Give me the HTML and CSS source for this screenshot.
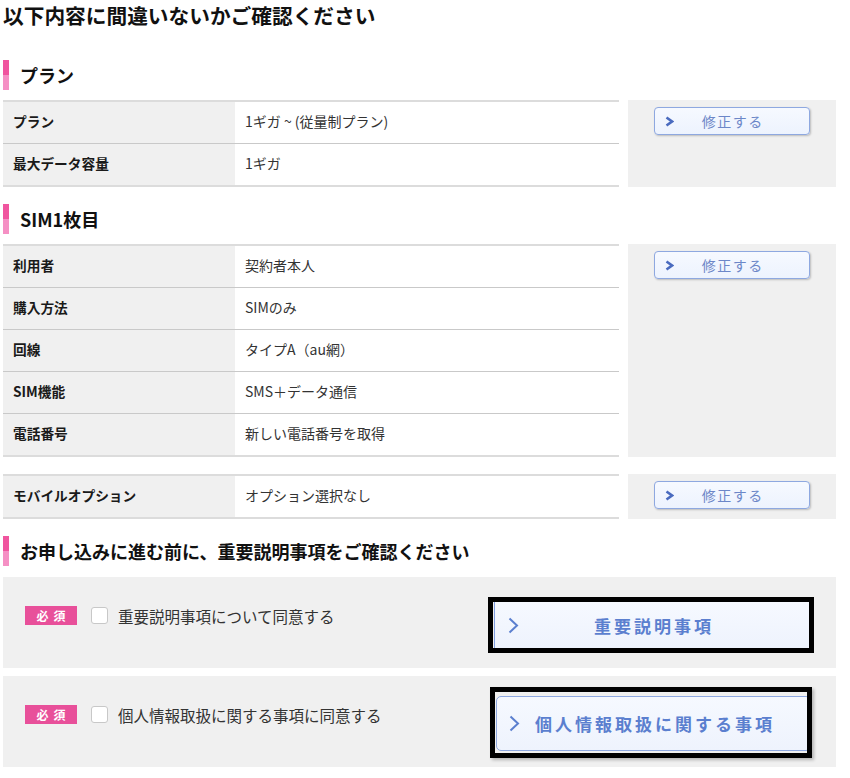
FILE: index.html
```html
<!DOCTYPE html>
<html lang="ja">
<head>
<meta charset="utf-8">
<title>確認</title>
<link rel="stylesheet" href="styles.css">
</head>
<body>
<div class="page">
  <h1 class="title">以下内容に間違いないかご確認ください</h1>

  <h2 class="sec-head first">プラン</h2>
  <div class="block">
    <div class="info">
      <div class="row"><div class="lbl">プラン</div><div class="val">1ギガ ~ (従量制プラン)</div></div>
      <div class="row"><div class="lbl">最大データ容量</div><div class="val">1ギガ</div></div>
    </div>
    <div class="edit-box">
      <button class="edit-btn" type="button">
        <svg class="chev-s" width="9" height="11" viewBox="0 0 9 11"><polyline points="1.5,1.5 7,5.5 1.5,9.5" fill="none" stroke="#4a6bbf" stroke-width="2.6"/></svg>
        <span>修正する</span>
      </button>
    </div>
  </div>

  <h2 class="sec-head">SIM1枚目</h2>
  <div class="block">
    <div class="info">
      <div class="row"><div class="lbl">利用者</div><div class="val">契約者本人</div></div>
      <div class="row"><div class="lbl">購入方法</div><div class="val">SIMのみ</div></div>
      <div class="row"><div class="lbl">回線</div><div class="val">タイプA（au網）</div></div>
      <div class="row"><div class="lbl">SIM機能</div><div class="val">SMS＋データ通信</div></div>
      <div class="row"><div class="lbl">電話番号</div><div class="val">新しい電話番号を取得</div></div>
    </div>
    <div class="edit-box">
      <button class="edit-btn" type="button">
        <svg class="chev-s" width="9" height="11" viewBox="0 0 9 11"><polyline points="1.5,1.5 7,5.5 1.5,9.5" fill="none" stroke="#4a6bbf" stroke-width="2.6"/></svg>
        <span>修正する</span>
      </button>
    </div>
  </div>

  <div class="block gap">
    <div class="info">
      <div class="row"><div class="lbl">モバイルオプション</div><div class="val">オプション選択なし</div></div>
    </div>
    <div class="edit-box">
      <button class="edit-btn" type="button">
        <svg class="chev-s" width="9" height="11" viewBox="0 0 9 11"><polyline points="1.5,1.5 7,5.5 1.5,9.5" fill="none" stroke="#4a6bbf" stroke-width="2.6"/></svg>
        <span>修正する</span>
      </button>
    </div>
  </div>

  <h2 class="sec-head">お申し込みに進む前に、重要説明事項をご確認ください</h2>

  <div class="agree first-agree">
    <div class="agree-left">
      <span class="badge">必須</span>
      <span class="check"></span>
      <span class="agree-text">重要説明事項について同意する</span>
    </div>
    <div class="frame frame-a">
      <button class="doc-btn doc-a" type="button">
        <svg class="chev-l" width="11" height="17" viewBox="0 0 11 17"><polyline points="1.5,1.5 9,8.5 1.5,15.5" fill="none" stroke="#5b7fcf" stroke-width="2"/></svg>
        <span>重要説明事項</span>
      </button>
    </div>
  </div>

  <div class="agree">
    <div class="agree-left">
      <span class="badge">必須</span>
      <span class="check"></span>
      <span class="agree-text">個人情報取扱に関する事項に同意する</span>
    </div>
    <div class="frame frame-b">
      <button class="doc-btn doc-b" type="button">
        <svg class="chev-l" width="11" height="17" viewBox="0 0 11 17"><polyline points="1.5,1.5 9,8.5 1.5,15.5" fill="none" stroke="#5b7fcf" stroke-width="2"/></svg>
        <span>個人情報取扱に関する事項</span>
      </button>
    </div>
  </div>
</div>
</body>
</html>
```

FILE: styles.css
```css
* { box-sizing: border-box; }

body {
  margin: 0;
  background: #fff;
  font-family: "Noto Sans CJK JP", "Noto Sans", sans-serif;
  color: #222;
}

.page {
  width: 836px;
  padding-left: 3px;
}

.title {
  margin: 0;
  font-size: 20.7px;
  line-height: 30px;
  font-weight: 700;
  color: #111;
}

.sec-head {
  display: flex;
  align-items: center;
  gap: 11px;
  height: 30px;
  margin: 17px 0 10px;
  font-size: 18px;
  font-weight: 700;
  color: #111;
}
.sec-head::before {
  content: "";
  width: 6px;
  height: 30px;
  background: linear-gradient(#f0559f 50%, #f590c4 50%);
}
.sec-head.first { margin-top: 30px; }

.block {
  display: flex;
  gap: 9px;
  align-items: stretch;
}
.block.gap { margin-top: 17px; }

.info {
  width: 616px;
  border-top: 2px solid #dcdcdc;
  border-bottom: 2px solid #dcdcdc;
}
.row {
  display: grid;
  grid-template-columns: 232px 1fr;
  height: 42px;
  border-bottom: 1px solid #c9c9c9;
}
.row:last-child {
  height: 41px;
  border-bottom: none;
}
.lbl {
  background: #f0f0f0;
  padding: 0 0 4px 10px;
  display: flex;
  align-items: center;
  font-size: 13.7px;
  font-weight: 700;
  color: #1a1a1a;
}
.val {
  padding: 0 0 4px 10px;
  display: flex;
  align-items: center;
  font-size: 14px;
  color: #333;
}

.edit-box {
  width: 208px;
  background: #f0f0f0;
  padding-top: 7px;
  display: flex;
  justify-content: center;
  align-items: flex-start;
}
.edit-btn {
  width: 156px;
  height: 28px;
  display: grid;
  grid-template-columns: 1fr auto 1fr;
  align-items: center;
  padding: 0 10px;
  border: 1px solid #8ea8e0;
  border-radius: 4px;
  background: linear-gradient(#f6f9ff, #edf3fe);
  box-shadow: 1px 1px 2px rgba(0, 0, 0, 0.22);
  font-family: inherit;
  font-size: 14px;
  letter-spacing: 1.5px;
  color: #6c87c8;
  cursor: pointer;
}
.edit-btn span { margin-right: -1.5px; }
.chev-s { justify-self: start; display: block; }

.agree {
  display: flex;
  align-items: flex-start;
  width: 833px;
  height: 91px;
  margin-top: 8px;
  background: #f0f0f0;
}
.agree.first-agree { margin-top: 11px; }

.agree-left {
  flex: 1;
  display: flex;
  align-items: center;
  height: 19px;
  margin-top: 29px;
  padding-left: 22px;
}
.badge {
  width: 52px;
  height: 19px;
  display: flex;
  align-items: center;
  justify-content: center;
  background: #e8509a;
  color: #fff;
  font-size: 12px;
  font-weight: 700;
  letter-spacing: 5px;
  padding-left: 5px;
}
.check {
  width: 17px;
  height: 17px;
  margin-left: 14px;
  background: #fff;
  border: 1.5px solid #c8c8c8;
  border-radius: 3px;
}
.agree-text {
  margin-left: 10px;
  font-size: 15.5px;
  color: #333;
}

.frame {
  border: 5px solid #000;
  overflow: hidden;
}
.frame-a {
  width: 326px;
  height: 56px;
  margin-top: 20px;
  margin-right: 22px;
}
.frame-b {
  width: 322px;
  height: 71px;
  margin-top: 11px;
  margin-right: 24px;
  padding: 4px 0 0 1px;
  box-shadow: 2px 2px 3px rgba(0, 0, 0, 0.25);
}

.doc-btn {
  display: grid;
  grid-template-columns: 1fr auto 1fr;
  align-items: center;
  background: linear-gradient(#f6f9ff, #eef3fd);
  font-family: inherit;
  font-size: 17px;
  font-weight: 700;
  letter-spacing: 3px;
  color: #5b7fcf;
  cursor: pointer;
}
.doc-btn span { margin-right: -3px; }
.chev-l { justify-self: start; display: block; }

.doc-a {
  width: 316px;
  height: 46px;
  margin-left: 1px;
  border: none;
  border-left: 1px solid #7f9de0;
  padding: 0 13px;
}
.doc-b {
  width: 315px;
  height: 55px;
  border: 1px solid #8ea8e0;
  border-radius: 5px;
  padding: 0 12px;
}
```
